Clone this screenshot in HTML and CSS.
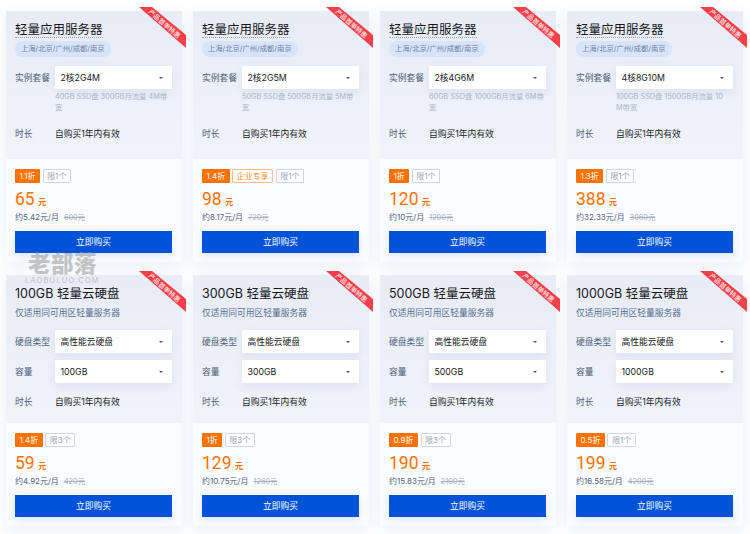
FILE: index.html
```html
<!DOCTYPE html>
<html lang="zh-CN">
<head>
<meta charset="utf-8">
<title>轻量应用服务器</title>
<link rel="stylesheet" href="styles.css">
</head>
<body>
<main class="grid">

<article class="card">
  <div class="head">
    <h3 class="title"><span class="dotted">轻量应用服务器</span></h3>
    <div class="slot"><span class="pill">上海/北京/广州/成都/南京</span></div>
    <div class="field first"><span class="label">实例套餐</span><div class="select">2核2G4M<i class="caret"></i></div></div>
    <p class="desc">40GB SSD盘 300GB月流量 4M带宽</p>
    <div class="time"><span class="label">时长</span><span class="value">自购买1年内有效</span></div>
  </div>
  <div class="foot">
    <div class="badges"><span class="off">1.1折</span><span class="limit">限1个</span></div>
    <div class="price"><b>65</b><em>元</em></div>
    <div class="sub">约5.42元/月<s>600元</s></div>
    <button class="buy">立即购买</button>
  </div>
  <svg class="ribbon" viewBox="0 0 48 42"><polygon points="0,0 13,0 47,28 47,41"/></svg>
  <span class="ribbon-text">产品首单特惠</span>
</article>

<article class="card">
  <div class="head">
    <h3 class="title"><span class="dotted">轻量应用服务器</span></h3>
    <div class="slot"><span class="pill">上海/北京/广州/成都/南京</span></div>
    <div class="field first"><span class="label">实例套餐</span><div class="select">2核2G5M<i class="caret"></i></div></div>
    <p class="desc">50GB SSD盘 500GB月流量 5M带宽</p>
    <div class="time"><span class="label">时长</span><span class="value">自购买1年内有效</span></div>
  </div>
  <div class="foot">
    <div class="badges"><span class="off">1.4折</span><span class="biz">企业专享</span><span class="limit">限1个</span></div>
    <div class="price"><b>98</b><em>元</em></div>
    <div class="sub">约8.17元/月<s>720元</s></div>
    <button class="buy">立即购买</button>
  </div>
  <svg class="ribbon" viewBox="0 0 48 42"><polygon points="0,0 13,0 47,28 47,41"/></svg>
  <span class="ribbon-text">产品首单特惠</span>
</article>

<article class="card">
  <div class="head">
    <h3 class="title"><span class="dotted">轻量应用服务器</span></h3>
    <div class="slot"><span class="pill">上海/北京/广州/成都/南京</span></div>
    <div class="field first"><span class="label">实例套餐</span><div class="select">2核4G6M<i class="caret"></i></div></div>
    <p class="desc">60GB SSD盘 1000GB月流量 6M带宽</p>
    <div class="time"><span class="label">时长</span><span class="value">自购买1年内有效</span></div>
  </div>
  <div class="foot">
    <div class="badges"><span class="off">1折</span><span class="limit">限1个</span></div>
    <div class="price"><b>120</b><em>元</em></div>
    <div class="sub">约10元/月<s>1200元</s></div>
    <button class="buy">立即购买</button>
  </div>
  <svg class="ribbon" viewBox="0 0 48 42"><polygon points="0,0 13,0 47,28 47,41"/></svg>
  <span class="ribbon-text">产品首单特惠</span>
</article>

<article class="card">
  <div class="head">
    <h3 class="title"><span class="dotted">轻量应用服务器</span></h3>
    <div class="slot"><span class="pill">上海/北京/广州/成都/南京</span></div>
    <div class="field first"><span class="label">实例套餐</span><div class="select">4核8G10M<i class="caret"></i></div></div>
    <p class="desc">100GB SSD盘 1500GB月流量 10<br>M带宽</p>
    <div class="time"><span class="label">时长</span><span class="value">自购买1年内有效</span></div>
  </div>
  <div class="foot">
    <div class="badges"><span class="off">1.3折</span><span class="limit">限1个</span></div>
    <div class="price"><b>388</b><em>元</em></div>
    <div class="sub">约32.33元/月<s>3060元</s></div>
    <button class="buy">立即购买</button>
  </div>
  <svg class="ribbon" viewBox="0 0 48 42"><polygon points="0,0 13,0 47,28 47,41"/></svg>
  <span class="ribbon-text">产品首单特惠</span>
</article>

<article class="card">
  <div class="head">
    <h3 class="title">100GB 轻量云硬盘</h3>
    <div class="slot"><span class="note">仅适用同可用区轻量服务器</span></div>
    <div class="field first"><span class="label">硬盘类型</span><div class="select">高性能云硬盘<i class="caret"></i></div></div>
    <div class="field"><span class="label">容量</span><div class="select">100GB<i class="caret"></i></div></div>
    <div class="time tight"><span class="label">时长</span><span class="value">自购买1年内有效</span></div>
  </div>
  <div class="foot">
    <div class="badges"><span class="off">1.4折</span><span class="limit">限3个</span></div>
    <div class="price"><b>59</b><em>元</em></div>
    <div class="sub">约4.92元/月<s>420元</s></div>
    <button class="buy">立即购买</button>
  </div>
  <svg class="ribbon" viewBox="0 0 48 42"><polygon points="0,0 13,0 47,28 47,41"/></svg>
  <span class="ribbon-text">产品首单特惠</span>
</article>

<article class="card">
  <div class="head">
    <h3 class="title">300GB 轻量云硬盘</h3>
    <div class="slot"><span class="note">仅适用同可用区轻量服务器</span></div>
    <div class="field first"><span class="label">硬盘类型</span><div class="select">高性能云硬盘<i class="caret"></i></div></div>
    <div class="field"><span class="label">容量</span><div class="select">300GB<i class="caret"></i></div></div>
    <div class="time tight"><span class="label">时长</span><span class="value">自购买1年内有效</span></div>
  </div>
  <div class="foot">
    <div class="badges"><span class="off">1折</span><span class="limit">限3个</span></div>
    <div class="price"><b>129</b><em>元</em></div>
    <div class="sub">约10.75元/月<s>1260元</s></div>
    <button class="buy">立即购买</button>
  </div>
  <svg class="ribbon" viewBox="0 0 48 42"><polygon points="0,0 13,0 47,28 47,41"/></svg>
  <span class="ribbon-text">产品首单特惠</span>
</article>

<article class="card">
  <div class="head">
    <h3 class="title">500GB 轻量云硬盘</h3>
    <div class="slot"><span class="note">仅适用同可用区轻量服务器</span></div>
    <div class="field first"><span class="label">硬盘类型</span><div class="select">高性能云硬盘<i class="caret"></i></div></div>
    <div class="field"><span class="label">容量</span><div class="select">500GB<i class="caret"></i></div></div>
    <div class="time tight"><span class="label">时长</span><span class="value">自购买1年内有效</span></div>
  </div>
  <div class="foot">
    <div class="badges"><span class="off">0.9折</span><span class="limit">限3个</span></div>
    <div class="price"><b>190</b><em>元</em></div>
    <div class="sub">约15.83元/月<s>2100元</s></div>
    <button class="buy">立即购买</button>
  </div>
  <svg class="ribbon" viewBox="0 0 48 42"><polygon points="0,0 13,0 47,28 47,41"/></svg>
  <span class="ribbon-text">产品首单特惠</span>
</article>

<article class="card">
  <div class="head">
    <h3 class="title">1000GB 轻量云硬盘</h3>
    <div class="slot"><span class="note">仅适用同可用区轻量服务器</span></div>
    <div class="field first"><span class="label">硬盘类型</span><div class="select">高性能云硬盘<i class="caret"></i></div></div>
    <div class="field"><span class="label">容量</span><div class="select">1000GB<i class="caret"></i></div></div>
    <div class="time tight"><span class="label">时长</span><span class="value">自购买1年内有效</span></div>
  </div>
  <div class="foot">
    <div class="badges"><span class="off">0.5折</span><span class="limit">限1个</span></div>
    <div class="price"><b>199</b><em>元</em></div>
    <div class="sub">约16.58元/月<s>4200元</s></div>
    <button class="buy">立即购买</button>
  </div>
  <svg class="ribbon" viewBox="0 0 48 42"><polygon points="0,0 13,0 47,28 47,41"/></svg>
  <span class="ribbon-text">产品首单特惠</span>
</article>

</main>
<div class="watermark"><strong>老部落</strong><span>LAOBULUO.COM</span></div>
</body>
</html>
```

FILE: styles.css
```css
* { box-sizing: border-box; }

html, body { margin: 0; height: 534px; overflow: hidden; background: #fff; }

body {
  position: relative;
  font-family: Inter, "Noto Sans CJK SC", sans-serif;
  color: #16181d;
}

.grid {
  display: grid;
  grid-template-columns: repeat(4, 176px);
  grid-auto-rows: 251px;
  column-gap: 11px;
  row-gap: 13px;
  padding: 11px 0 0 6px;
}

.card {
  position: relative;
  display: flex;
  flex-direction: column;
  background: #fbfcff;
  box-shadow: 0 4px 14px rgba(70, 100, 170, .1);
}

.head {
  height: 148px;
  padding: 9px 9px 0;
  background: linear-gradient(180deg, #e7ecf6 0%, #f0f3fa 100%);
}

.title {
  height: 18px;
  margin: 0;
  font-size: 12.5px;
  line-height: 20px;
  font-weight: 400;
  color: #16181d;
}

.dotted { border-bottom: 1px dotted #9aa4b6; }

.slot { display: flex; height: 16px; margin-top: 3px; }

.pill {
  height: 15.5px;
  padding: 0 6px;
  border-radius: 8px;
  background: #d7e4fb;
  color: #6f82a0;
  font-size: 7.3px;
  line-height: 15.5px;
  white-space: nowrap;
}

.note {
  display: block;
  color: #5b6f8f;
  font-size: 8.75px;
  line-height: 16px;
}

.field {
  display: flex;
  align-items: center;
  margin-top: 7px;
}

.field.first { margin-top: 9px; }

.label {
  flex: none;
  width: 40px;
  padding-top: 1px;
  color: #4f5f78;
  font-size: 8.75px;
  line-height: 16px;
}

.select {
  position: relative;
  width: 117px;
  height: 23px;
  padding-left: 5.5px;
  background: #fff;
  box-shadow: 0 3px 8px rgba(70, 100, 170, .1);
  font-size: 8.75px;
  line-height: 25px;
  color: #16181d;
}

.caret {
  position: absolute;
  top: 10.5px;
  right: 9px;
  border-left: 2.5px solid transparent;
  border-right: 2.5px solid transparent;
  border-top: 2.5px solid #4a5568;
}

.desc {
  margin: 2px 0 0 40px;
  padding-right: 2px;
  color: #aab6ca;
  font-size: 7.3px;
  line-height: 11px;
  word-break: break-all;
}

.time {
  display: flex;
  align-items: center;
  margin-top: 12px;
  height: 16px;
}

.time.tight { margin-top: 10px; }

.value { padding-top: 1px; font-size: 8.75px; line-height: 16px; color: #16181d; }

.foot {
  flex: 1;
  padding: 10px 9px 0;
}

.badges { display: flex; gap: 2.5px; height: 14px; }

.off, .biz, .limit {
  padding: 0 3.5px;
  font-size: 8px;
  line-height: 13px;
  border-radius: 1px;
  border: .5px solid;
}

.off { background: #ff7200; border-color: #ff7200; color: #fff; }
.biz { background: #fff; border-color: #ffbe8a; color: #ff8a2e; }
.limit { background: #fff; border-color: #cfd6e3; color: #98a3b5; }

.price {
  display: flex;
  align-items: baseline;
  height: 22px;
  margin-top: 5px;
  color: #ff7200;
}

.price b { font-family: Roboto, sans-serif; font-size: 17.5px; font-weight: 400; line-height: 22px; }
.price em { margin-left: 3.5px; font-style: normal; font-size: 8px; font-weight: 700; }

.sub {
  margin-top: 1px;
  color: #56647c;
  font-size: 8px;
  line-height: 12px;
}

.sub s { margin-left: 5px; color: #a4aec0; font-size: 7.3px; }

.buy {
  display: block;
  width: 157px;
  height: 22.5px;
  margin-top: 6.5px;
  padding: 0;
  border: 0;
  background: #0052d9;
  color: #fff;
  font: inherit;
  font-size: 8.75px;
  line-height: 22.5px;
  box-shadow: 0 3px 8px rgba(0, 82, 217, .12);
}

.ribbon {
  position: absolute;
  top: -4px;
  right: -5px;
  width: 48px;
  height: 42px;
  fill: #f8404a;
  pointer-events: none;
}

.ribbon-text {
  position: absolute;
  top: 9px;
  right: -5px;
  width: 46px;
  color: #fff;
  font-size: 6.6px;
  line-height: 8px;
  text-align: center;
  white-space: nowrap;
  transform: rotate(41deg);
}

.watermark {
  position: absolute;
  top: 251px;
  left: 25px;
  display: flex;
  flex-direction: column;
  align-items: center;
  color: rgba(150, 150, 150, .55);
  pointer-events: none;
}

.watermark strong {
  font-size: 22.5px;
  line-height: 25px;
  font-weight: 900;
  letter-spacing: .5px;
}

.watermark span {
  font-size: 7.5px;
  line-height: 9px;
  letter-spacing: 1.2px;
  white-space: nowrap;
}
```
